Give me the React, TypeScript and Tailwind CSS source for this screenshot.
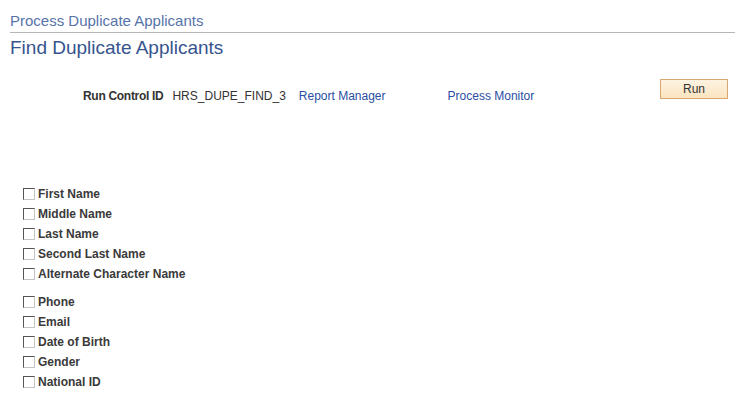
import React from 'react';

const groupOne = ['First Name', 'Middle Name', 'Last Name', 'Second Last Name', 'Alternate Character Name'];
const groupTwo = ['Phone', 'Email', 'Date of Birth', 'Gender', 'National ID'];

function CheckRow({ label }: { label: string }) {
  return (
    <label className="flex items-center h-[20px] pl-[23px]">
      <span className="w-[12px] h-[12px] bg-white border border-t-[#555555] border-l-[#555555] border-b-[#c4c4c4] border-r-[#c4c4c4]" />
      <span className="ml-[3px] text-[12px] leading-[20px] font-bold text-[#3a3a3a]">{label}</span>
    </label>
  );
}

export default function App() {
  return (
    <div className="w-[735px] h-[394px] bg-white font-['Liberation_Sans',Arial,sans-serif] overflow-hidden">
      <div className="ml-[10px] pt-[12px] pb-[2px] border-b border-[#b5b5b5]">
        <h2 className="text-[15px] leading-[18px] text-[#5673a9]">Process Duplicate Applicants</h2>
      </div>
      <h1 className="ml-[10px] mt-[3px] text-[19px] leading-[24px] text-[#36548e]">Find Duplicate Applicants</h1>

      <div className="flex items-start mt-[19px]">
        <div className="flex items-center mt-[10px] ml-[83px] text-[12px] leading-[14px]">
          <span className="font-bold text-[#333333] tracking-[-0.3px]">Run Control ID</span>
          <span className="ml-[9px] text-[#333333]">HRS_DUPE_FIND_3</span>
          <a className="ml-[13px] text-[#2a4ea3]">Report Manager</a>
          <a className="ml-[62px] text-[#2a4ea3]">Process Monitor</a>
        </div>
        <button className="ml-auto mr-[7px] w-[68px] h-[20px] border border-[#d9a772] bg-gradient-to-b from-[#fdf3e2] to-[#fbe4bf] text-[12px] leading-[18px] text-[#333333]">
          Run
        </button>
      </div>

      <div className="mt-[81px]">
        {groupOne.map((l) => (
          <CheckRow key={l} label={l} />
        ))}
        <div className="h-[8px]" />
        {groupTwo.map((l) => (
          <CheckRow key={l} label={l} />
        ))}
      </div>
    </div>
  );
}
